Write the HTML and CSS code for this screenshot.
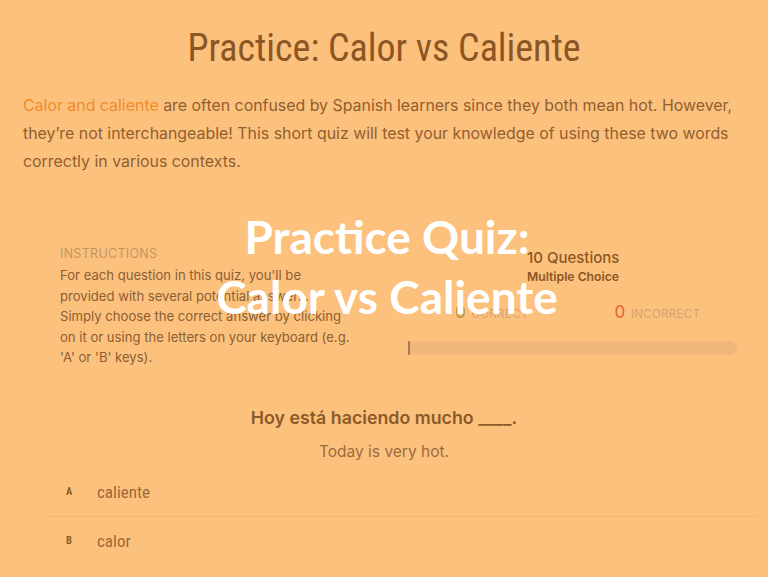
FILE: index.html
```html
<!DOCTYPE html>
<html>
<head>
<meta charset="utf-8">
<link rel="stylesheet" href="styles.css">
</head>
<body>
<div class="page">
  <h1 class="title">Practice: Calor vs Caliente</h1>
  <p class="intro"><span class="link">Calor and caliente</span> are often confused by Spanish learners since they both mean hot. However, they’re not interchangeable! This short quiz will test your knowledge of using these two words correctly in various contexts.</p>

  <div class="quiz-head">
    <div class="instructions">
      <div class="label">INSTRUCTIONS</div>
      <p class="instr-text">For each question in this quiz, you'll be<br>provided with several potential answers.<br>Simply choose the correct answer by clicking<br>on it or using the letters on your keyboard (e.g.<br>'A' or 'B' keys).</p>
    </div>
    <div class="stats">
      <div class="meta">
        <div class="count">10 Questions</div>
        <div class="kind">Multiple Choice</div>
      </div>
      <div class="scores">
        <div class="score"><span class="num good">0</span> CORRECT</div>
        <div class="score"><span class="num bad">0</span> INCORRECT</div>
      </div>
      <div class="bar"><div class="bar-fill"></div></div>
    </div>
  </div>

  <div class="question">
    <div class="q">Hoy está haciendo mucho ____.</div>
    <div class="trans">Today is very hot.</div>
  </div>

  <ul class="options">
    <li class="option"><span class="key">A</span><span class="ans">caliente</span></li>
    <li class="option"><span class="key">B</span><span class="ans">calor</span></li>
  </ul>
</div>
<div class="overlay">Practice Quiz:<br>Calor vs Caliente</div>
</body>
</html>
```
FILE: styles.css
```css
html, body {
  margin: 0;
  padding: 0;
}
body {
  background: #fdc17e;
  width: 768px;
  height: 577px;
  overflow: hidden;
  position: relative;
  font-family: Roboto, "Liberation Sans", sans-serif;
}
.page {
  padding: 0 23px;
}
.title {
  margin: 0;
  padding-top: 26px;
  text-align: center;
  font-family: "Roboto Condensed", Roboto, sans-serif;
  font-weight: 400;
  font-size: 38px;
  line-height: 44px;
  color: #8c5624;
}
.intro {
  margin: 22px 0 0;
  font-family: Inter, "Open Sans", sans-serif;
  font-weight: 400;
  font-size: 15.9px;
  line-height: 28px;
  color: #915f2f;
}
.link {
  color: #f08c2c;
}
.quiz-head {
  display: flex;
  margin-top: 70px;
  padding-left: 37px;
}
.instructions {
  width: 310px;
  font-family: Inter, "Open Sans", sans-serif;
  white-space: nowrap;
}
.label {
  font-size: 12.5px;
  line-height: 16px;
  color: #c49560;
  letter-spacing: 0.3px;
}
.instr-text {
  margin: 3px 0 0;
  font-size: 13.1px;
  line-height: 20.5px;
  color: #8a5f33;
}
.stats {
  margin-left: 38px;
  width: 329px;
  font-family: Inter, "Open Sans", sans-serif;
}
.meta {
  padding-left: 119px;
  padding-top: 2px;
}
.count {
  font-size: 15px;
  line-height: 20px;
  color: #8a5624;
  font-weight: 500;
}
.kind {
  font-size: 12.2px;
  line-height: 18px;
  color: #8a5624;
  font-weight: 600;
}
.scores {
  display: flex;
  margin-top: 16px;
  padding-left: 47px;
}
.score {
  font-size: 11.5px;
  color: #d4a370;
  letter-spacing: 0.3px;
  line-height: 20px;
}
.score + .score {
  margin-left: 86px;
}
.num {
  font-size: 17px;
  margin-right: 2px;
}
.good { color: #b7913a; }
.bad { color: #e8623a; }
.bar {
  margin-top: 17px;
  height: 14px;
  border-radius: 7px;
  background: #f2b87b;
  position: relative;
}
.bar-fill {
  width: 2px;
  height: 14px;
  background: #a87c50;
}
.question {
  margin-top: 38px;
  text-align: center;
  font-family: Inter, "Open Sans", sans-serif;
}
.q {
  font-size: 17.8px;
  font-weight: 600;
  color: #8c5a28;
  line-height: 24px;
}
.trans {
  margin-top: 10px;
  font-size: 15.5px;
  color: #9b6c3c;
  line-height: 24px;
}
.options {
  list-style: none;
  margin: 4px -13px 0 0;
  padding: 0 0 0 24px;
}
.option {
  display: flex;
  align-items: center;
  height: 48px;
  padding-left: 19px;
  font-family: "Roboto Condensed", Roboto, sans-serif;
}
.option + .option {
  border-top: 1px solid #f3b574;
}
.key {
  width: 31px;
  font-size: 10.5px;
  font-weight: 700;
  color: #8c5a28;
}
.ans {
  font-size: 17px;
  font-weight: 400;
  color: #9a6a38;
}
.overlay {
  position: absolute;
  left: 0;
  right: 0;
  top: 207px;
  text-align: center;
  font-family: Lato, "Open Sans", sans-serif;
  font-weight: 700;
  font-size: 46px;
  line-height: 60px;
  color: #ffffff;
  padding-left: 6px;
}
```
